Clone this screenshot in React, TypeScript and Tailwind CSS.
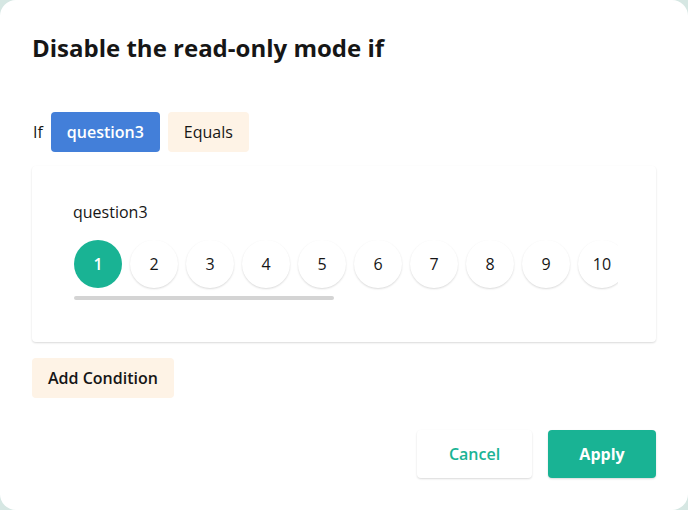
import { Fragment } from 'react';

const values = [1, 2, 3, 4, 5, 6, 7, 8, 9, 10];

function Pill({ label, tone }: { label: string; tone: 'blue' | 'cream' }) {
    return (
        <span
            className={
                tone === 'blue'
                    ? 'flex h-10 items-center rounded-[4px] bg-[#437fd9] px-4 text-[16px] font-semibold text-white'
                    : 'flex h-10 items-center rounded-[4px] bg-[#fef3e6] px-4 text-[16px] text-[#161616]'
            }
        >
            {label}
        </span>
    );
}

export default function App() {
    return (
        <div className="h-[510px] w-[688px] bg-[#d6e7e3] font-['Open_Sans',sans-serif]">
            <div className="flex h-full w-full flex-col rounded-[16px] bg-white px-8 pt-[30px]">
                <h1 className="text-[24px] font-bold leading-[36px] text-[#161616]">
                    Disable the read-only mode if
                </h1>

                <div className="mt-[46px] flex items-center gap-2">
                    <span className="pl-px text-[16px] text-[#161616]">If</span>
                    <Pill label="question3" tone="blue" />
                    <Pill label="Equals" tone="cream" />
                </div>

                {/* value card */}
                <div className="mt-[14px] rounded-[4px] bg-white px-[41px] pb-[42px] pt-[34px] shadow-[0_1px_2px_rgba(0,0,0,0.15)]">
                    <div className="text-[16px] leading-6 text-[#161616]">question3</div>
                    <div className="ml-px mt-[16px] w-[544px] overflow-hidden">
                        <div className="flex gap-2">
                            {values.map((v) => (
                                <Fragment key={v}>
                                    <span
                                        className={
                                            v === 1
                                                ? 'flex h-12 w-12 shrink-0 items-center justify-center rounded-full bg-[#19b394] text-[16px] font-semibold text-white'
                                                : 'flex h-12 w-12 shrink-0 items-center justify-center rounded-full bg-white text-[16px] text-[#161616] shadow-[0_1px_2px_rgba(0,0,0,0.15)]'
                                        }
                                    >
                                        {v}
                                    </span>
                                </Fragment>
                            ))}
                        </div>
                        <div className="mt-2 h-1 w-[260px] rounded-full bg-[#d4d4d4]" />
                    </div>
                </div>

                <div className="mt-4">
                    <button className="h-10 rounded-[4px] bg-[#fef3e6] px-4 text-[16px] font-semibold text-[#161616]">
                        Add Condition
                    </button>
                </div>

                <div className="mt-8 flex justify-end gap-4">
                    <button className="h-12 w-[115px] rounded-[4px] bg-white text-[16px] font-semibold text-[#19b394] shadow-[0_1px_2px_rgba(0,0,0,0.15)]">
                        Cancel
                    </button>
                    <button className="h-12 w-[108px] rounded-[4px] bg-[#19b394] text-[16px] font-bold text-white shadow-[0_1px_2px_rgba(0,0,0,0.15)]">
                        Apply
                    </button>
                </div>
            </div>
        </div>
    );
}
